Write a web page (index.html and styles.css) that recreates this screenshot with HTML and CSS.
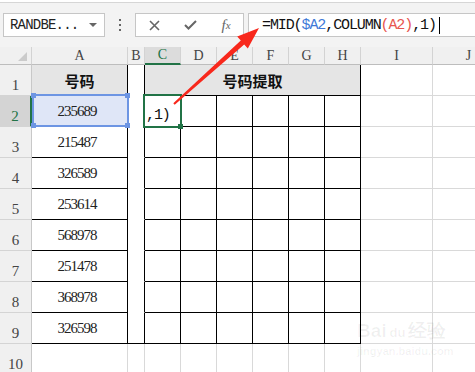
FILE: index.html
```html
<!DOCTYPE html>
<html lang="zh">
<head>
  <meta charset="UTF-8">
  <title>号码提取</title>
  <link rel="stylesheet" href="styles.css">
</head>
<body>

  <!-- formula bar -->
  <div class="toolbar">
    <div class="namebox">RANDBE...<span class="drop"></span></div>
    <div class="dots"><i></i><i></i><i></i></div>
    <div class="fbtns">
      <span class="ico">
        <svg width="11" height="11" viewBox="0 0 11 11"><path d="M1 1L10 10M10 1L1 10" stroke="#666" stroke-width="1.6" fill="none"/></svg>
      </span>
      <span class="ico">
        <svg width="13" height="10" viewBox="0 0 13 10"><path d="M1 5L4.5 8.5L12 1" stroke="#666" stroke-width="2" fill="none"/></svg>
      </span>
      <span class="ico fx">f<small>x</small></span>
    </div>
    <div class="formula">=MID(<span class="ref1">$A2</span>,COLUMN<span class="ref2">(A2)</span>,1)<span class="caret"></span></div>
  </div>

  <!-- sheet -->
  <div class="sheet">
    <div class="ch corner"><span class="tri"></span></div>
    <div class="ch">A</div>
    <div class="ch">B</div>
    <div class="ch sel">C</div>
    <div class="ch">D</div>
    <div class="ch">E</div>
    <div class="ch">F</div>
    <div class="ch">G</div>
    <div class="ch">H</div>
    <div class="ch">I</div>
    <div class="ch">J</div>

    <div class="rh">1</div>
    <div class="c k hd">号码</div>
    <div class="c sp"></div>
    <div class="c k hd merged">号码提取</div>
    <div class="c"></div>
    <div class="c"></div>

    <div class="rh sel">2</div>
    <div class="c k n cur">235689
      <span class="blue"><i class="tl"></i><i class="tr"></i><i class="bl"></i><i class="br"></i></span>
    </div>
    <div class="c sp"></div>
    <div class="c k edit">,1)<span class="green"></span><span class="handle"></span></div>
    <div class="c k"></div><div class="c k"></div><div class="c k"></div><div class="c k"></div><div class="c k"></div>
    <div class="c"></div><div class="c"></div>

    <div class="rh">3</div>
    <div class="c k n">215487</div>
    <div class="c sp"></div>
    <div class="c k"></div><div class="c k"></div><div class="c k"></div><div class="c k"></div><div class="c k"></div><div class="c k"></div>
    <div class="c"></div><div class="c"></div>

    <div class="rh">4</div>
    <div class="c k n">326589</div>
    <div class="c sp"></div>
    <div class="c k"></div><div class="c k"></div><div class="c k"></div><div class="c k"></div><div class="c k"></div><div class="c k"></div>
    <div class="c"></div><div class="c"></div>

    <div class="rh">5</div>
    <div class="c k n">253614</div>
    <div class="c sp"></div>
    <div class="c k"></div><div class="c k"></div><div class="c k"></div><div class="c k"></div><div class="c k"></div><div class="c k"></div>
    <div class="c"></div><div class="c"></div>

    <div class="rh">6</div>
    <div class="c k n">568978</div>
    <div class="c sp"></div>
    <div class="c k"></div><div class="c k"></div><div class="c k"></div><div class="c k"></div><div class="c k"></div><div class="c k"></div>
    <div class="c"></div><div class="c"></div>

    <div class="rh">7</div>
    <div class="c k n">251478</div>
    <div class="c sp"></div>
    <div class="c k"></div><div class="c k"></div><div class="c k"></div><div class="c k"></div><div class="c k"></div><div class="c k"></div>
    <div class="c"></div><div class="c"></div>

    <div class="rh">8</div>
    <div class="c k n">368978</div>
    <div class="c sp"></div>
    <div class="c k"></div><div class="c k"></div><div class="c k"></div><div class="c k"></div><div class="c k"></div><div class="c k"></div>
    <div class="c"></div><div class="c"></div>

    <div class="rh">9</div>
    <div class="c k n">326598</div>
    <div class="c sp last"></div>
    <div class="c k"></div><div class="c k"></div><div class="c k"></div><div class="c k"></div><div class="c k"></div><div class="c k"></div>
    <div class="c"></div><div class="c"></div>

    <div class="rh">10</div>
    <div class="c"></div><div class="c"></div>
    <div class="c"></div><div class="c"></div><div class="c"></div><div class="c"></div><div class="c"></div><div class="c"></div>
    <div class="c"></div><div class="c"></div>
  </div>

  <!-- red arrow pointing at the formula -->
  <svg class="arrow" width="475" height="372" viewBox="0 0 475 372">
    <polygon points="173.3,103.2 240.8,40.6 237.2,36.5 259,28 247.8,48.5 244.2,44.4 174.7,104.8" fill="#f8281c"/>
  </svg>

  <div class="mark">
    <div class="mark-top">Bai<b>du</b>经验</div>
    <div class="mark-url">jingyan.baidu.com</div>
  </div>

</body>
</html>
```

FILE: styles.css
```css
* { box-sizing: border-box; }
body { margin: 0; width: 475px; height: 372px; overflow: hidden; background: #fff; font-family: "Liberation Mono", monospace; color: #222; position: relative; }

/* formula bar */
.toolbar { margin-top: 2px; height: 45px; background: #f3f3f3; border-top: 1px solid #d6d6d6; display: flex; align-items: center; padding-left: 3px; }
.namebox { width: 102px; height: 24px; background: #fff; border: 1px solid #c6c6c6; display: flex; align-items: center; padding-left: 6px; font-size: 14px; letter-spacing: -0.8px; color: #222; }
.drop { margin-left: auto; margin-right: 7px; width: 0; height: 0; border-left: 4px solid transparent; border-right: 4px solid transparent; border-top: 4px solid #666; }
.dots { width: 30px; display: flex; flex-direction: column; align-items: center; gap: 3px; }
.dots i { width: 2px; height: 2px; background: #666; }
.fbtns { width: 109px; height: 24px; background: #fff; border: 1px solid #c6c6c6; display: grid; grid-template-columns: 36px 36px 36px; align-items: center; }
.ico { display: flex; justify-content: center; align-items: center; }
.fx { font-family: "Liberation Serif", serif; font-style: italic; font-size: 15px; color: #666; }
.fx small { font-size: 11px; }
.formula { flex: 1; margin-left: 4px; height: 24px; background: #fff; border: 1px solid #c6c6c6; border-right: none; display: flex; align-items: center; padding-left: 13px; font-size: 15px; letter-spacing: -1.1px; color: #111; white-space: nowrap; }
.ref1 { color: #3f79d8; }
.ref2 { color: #e8564f; }
.caret { display: inline-block; width: 1px; height: 17px; background: #000; margin-left: 3px; }

/* sheet */
.sheet { width: 475px; overflow: hidden; display: grid; grid-template-columns: 32px 96px 17px repeat(6, 36px) 72px 72px; grid-template-rows: 18px; grid-auto-rows: 31px; }
.sheet > div { border-right: 1px solid #d9d9d9; border-bottom: 1px solid #d9d9d9; }
.ch { background: #f0f0f0; border-right-color: #d3d3d3 !important; border-bottom-color: #bdbdbd !important; color: #444; font-family: "Liberation Serif", serif; font-size: 14px; display: flex; align-items: center; justify-content: center; }
.ch.sel { background: #dcdcdc; color: #217346; border-bottom: 2px solid #217346 !important; }
.corner { position: relative; }
.tri { position: absolute; right: 4px; bottom: 3px; width: 0; height: 0; border-left: 9px solid transparent; border-bottom: 9px solid #cbcbcb; }

.rh { background: #f0f0f0; border-right-color: #c8c8c8 !important; border-bottom-color: #d4d4d4 !important; color: #444; font-family: "Liberation Serif", serif; font-size: 15px; display: flex; justify-content: center; align-items: flex-end; padding-bottom: 1px; }
.rh.sel { background: #d4d4d4; color: #217346; border-right: 2px solid #217346 !important; }

.c { display: flex; align-items: center; justify-content: center; }
.k { border-right-color: #000 !important; border-bottom-color: #000 !important; }
.sp { border-right-color: #000 !important; border-bottom-color: transparent !important; }
.sp.last { border-bottom-color: #000 !important; }
.hd { background: #e5e5e5; font-family: "Noto Sans CJK SC", sans-serif; font-weight: 700; font-size: 15px; color: #111; }
.merged { grid-column: span 6; }
.n { font-family: "Liberation Serif", serif; font-size: 15px; letter-spacing: -1px; color: #222; padding-right: 5px; }

/* A2: highlighted reference */
.cur { position: relative; background: #dfe6f7; }
.blue { position: absolute; top: -2px; left: 0; right: -2px; bottom: -1px; border: 2px solid #6d95e3; }
.blue i { position: absolute; width: 5px; height: 5px; background: #6d95e3; }
.blue .tl { left: -3px; top: -3px; }
.blue .tr { right: -3px; top: -3px; }
.blue .bl { left: -3px; bottom: -3px; }
.blue .br { right: -3px; bottom: -3px; }

/* C2: cell being edited */
.edit { position: relative; justify-content: flex-start; align-items: flex-end; padding: 0 0 2px 1px; font-size: 15px; letter-spacing: -1.1px; color: #111; }
.green { position: absolute; top: -2px; left: -2px; right: -2px; bottom: -2px; border: 2px solid #217346; }
.handle { position: absolute; right: -3px; bottom: -3px; width: 5px; height: 5px; background: #217346; }

.arrow { position: absolute; left: 0; top: 0; pointer-events: none; }

.mark { position: absolute; left: 357px; top: 320px; color: rgba(0, 0, 0, 0.06); font-family: "Liberation Sans", sans-serif; }
.mark-top { font-size: 19px; font-weight: 700; line-height: 22px; }
.mark-top b { font-size: 13px; margin: 0 3px; }
.mark-url { font-size: 11px; line-height: 14px; font-weight: 700; }
```
